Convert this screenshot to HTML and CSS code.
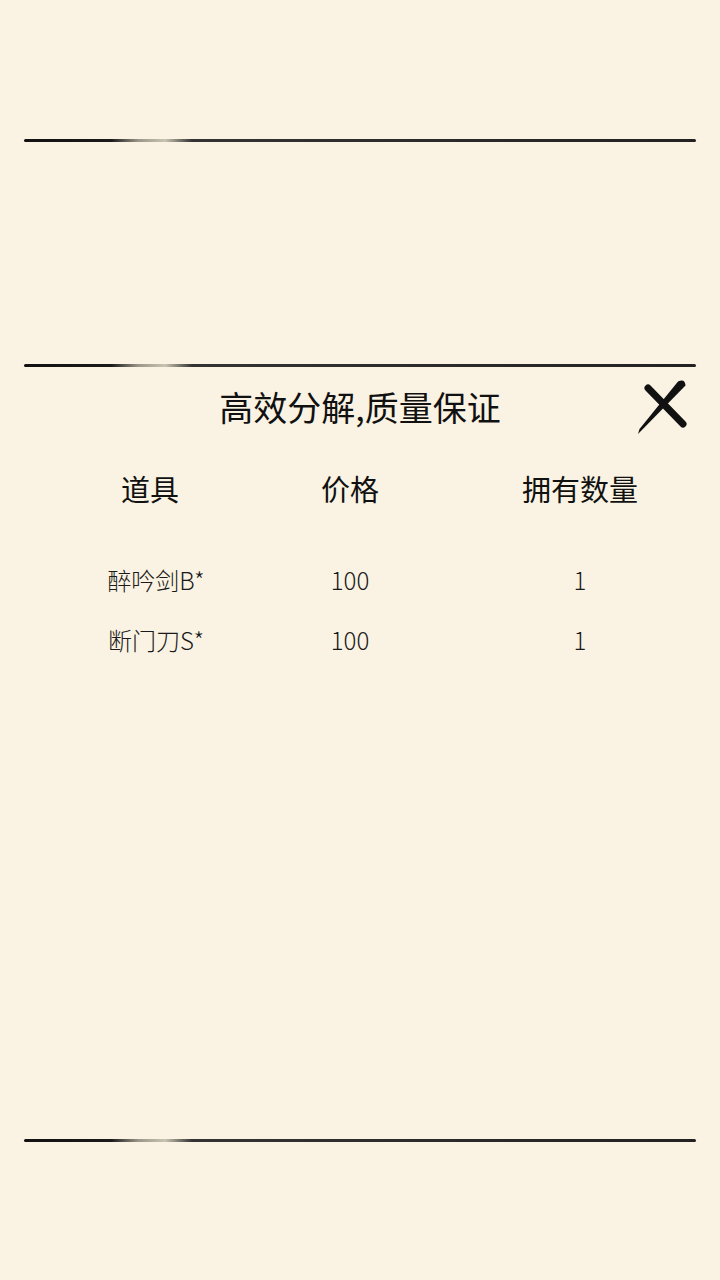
FILE: index.html
```html
<!DOCTYPE html>
<html lang="zh-CN">
<head>
    <meta charset="UTF-8">
    <meta name="viewport" content="width=device-width, initial-scale=1.0">
    <title>分解</title>
    <link rel="stylesheet" href="styles.css">
</head>
<body>
    <div class="page">
        <div class="rule rule-top"></div>
        <div class="top-space"></div>
        <div class="rule"></div>

        <div class="panel">
            <h1 class="title">高效分解,质量保证</h1>
            <button class="close-btn" aria-label="关闭">
                <svg width="52" height="56" viewBox="0 0 52 56">
                    <line x1="12" y1="8" x2="47" y2="44" stroke="#111" stroke-width="7" stroke-linecap="round"/>
                    <path d="M42 1.5 Q49 -2 49.5 5.5 L2 54 L3.5 49 Z" fill="#111"/>
                </svg>
            </button>

            <div class="table-head">
                <div>道具</div>
                <div>价格</div>
                <div>拥有数量</div>
            </div>

            <div class="table-body">
                <div class="row">
                    <div>醉吟剑B*</div>
                    <div>100</div>
                    <div>1</div>
                </div>
                <div class="row">
                    <div>断门刀S*</div>
                    <div>100</div>
                    <div>1</div>
                </div>
            </div>
        </div>

        <div class="rule rule-bottom"></div>
    </div>
</body>
</html>
```

FILE: styles.css
```css
body {
    margin: 0;
    background-color: #faf3e3;
    font-family: "Noto Sans CJK SC", "Noto Sans", sans-serif;
    color: #111;
}
.page {
    height: 1280px;
    display: flex;
    flex-direction: column;
}
.rule {
    height: 3px;
    margin: 0 24px;
    border-radius: 2px;
    background: linear-gradient(to right,
        #111 0%, #1a1a1a 13%, #9a968a 17%, #c9c3b2 21%, #333 25%, #222 100%);
}
.rule-top {
    margin-top: 139px;
}
.top-space {
    height: 222px;
}
.rule-bottom {
    margin-top: auto;
    margin-bottom: 138px;
}
.panel {
    position: relative;
    padding-top: 20px;
}
.title {
    margin: 0;
    font-size: 34px;
    font-weight: normal;
    line-height: 40px;
    text-align: center;
}
.close-btn {
    position: absolute;
    top: 13px;
    left: 636px;
    padding: 0;
    border: none;
    background: none;
    cursor: pointer;
}
.close-btn svg {
    display: block;
}
.table-head, .row {
    display: grid;
    grid-template-columns: 200px 200px 260px;
    padding-left: 50px;
    text-align: center;
}
.table-head {
    margin-top: 43px;
    font-size: 29px;
    line-height: 36px;
}
.table-body {
    margin-top: 43px;
}
.row {
    height: 60px;
    align-items: center;
    font-size: 24px;
    font-weight: 300;
    color: #1a1a1a;
}
.row div:first-child {
    padding-left: 12px;
}
```
